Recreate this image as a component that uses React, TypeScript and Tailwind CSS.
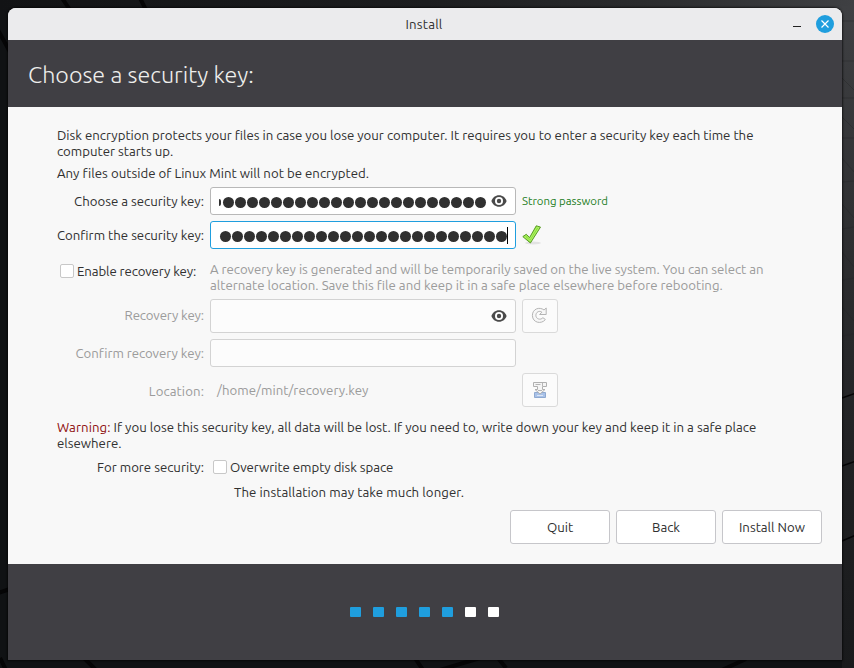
import type { ReactNode } from "react";

function Wallpaper() {
  return (
    <svg className="absolute inset-0" width="854" height="668" viewBox="0 0 854 668" aria-hidden="true">
      <defs>
        <linearGradient id="top" x1="0" y1="0" x2="1" y2="0">
          <stop offset="0" stopColor="#121315" />
          <stop offset="0.5" stopColor="#1c1d1f" />
          <stop offset="0.75" stopColor="#2a2b2d" />
          <stop offset="1" stopColor="#3f4043" />
        </linearGradient>
        <linearGradient id="side" x1="0" y1="0" x2="0" y2="1">
          <stop offset="0" stopColor="#3f4043" />
          <stop offset="0.35" stopColor="#2e2f31" />
          <stop offset="0.7" stopColor="#202123" />
          <stop offset="1" stopColor="#191a1c" />
        </linearGradient>
      </defs>
      <rect width="854" height="668" fill="#101214" />
      <rect width="854" height="20" fill="url(#top)" />
      <rect x="842" y="6" width="12" height="662" fill="url(#side)" />
      <g stroke="#050506" strokeWidth="4" fill="none">
        <path d="M62 -2l8 12M140 -2l6 12M-2 30l12 22M-2 593l12 -4M0 658l6 12M84 658l12 12M415 658l8 12M440 670l40 -12M498 658l8 10M722 670l24 -11" />
      </g>
      <path d="M842 398l14 -5M842 466l14 -5M842 541l14 -6" stroke="#050506" strokeWidth="1.500" />
      <path d="M842 21h12M842 61h12M842 98h12M842 138h12M842 182l12 -1M842 229l12 -2M842 280l12 -2M842 336l12 -2M842 78l12 12M842 117l12 12M842 158l12 14M842 204l12 14M842 252l12 15M842 307l12 14" stroke="#252628" strokeWidth=".6" opacity=".7" />
    </svg>
  );
}

function Eye() {
  return (
    <svg width="16" height="16" viewBox="0 0 16 16" className="shrink-0" aria-hidden="true">
      <path d="M8 2.2C4.4 2.2 1.5 4.6.4 8c1.100 3.400 4 5.800 7.600 5.800s6.500-2.400 7.600-5.800C14.500 4.600 11.600 2.200 8 2.200z" fill="#4a4a4a" />
      <circle cx="8" cy="8" r="4" fill="#fff" />
      <circle cx="8" cy="8" r="2.200" fill="#4a4a4a" />
    </svg>
  );
}

function Dots({ count }: { count: number }) {
  return (
    <>
      {Array.from({ length: count }, (_, i) => (
        <span key={i} className="mr-px h-[11px] w-[11px] shrink-0 rounded-full bg-[#303030]" />
      ))}
    </>
  );
}

function CheckMark() {
  return (
    <svg width="20" height="20" viewBox="0 0 20 20" className="overflow-visible" aria-hidden="true">
      <ellipse cx="11" cy="18" rx="8" ry="1.500" fill="#e2e2e2" />
      <path d="M.8 11.600l3.500-2.300 3.300 3.200L14.300.8l4.200 1.300L8.400 18z" fill="#8ae234" stroke="#5c9a2a" strokeLinejoin="round" />
      <path d="M2.500 11.700l1.700-1.100 3.600 3.600L15 2.100l1.900.6L8.300 16.200z" fill="none" stroke="#b9f27c" strokeWidth=".8" />
    </svg>
  );
}

function Reload() {
  return (
    <svg width="16" height="16" viewBox="0 0 16 16" className="-translate-x-px -translate-y-px" aria-hidden="true">
      <path
        d="M15.200.9v6.600H8.600l2.300-2.300C8.100 3.200 4.900 5.200 4.900 8.400c0 3.600 4.600 5.100 7 2.300l2.500 1.800C10.500 17.600 1.400 15.900 1.400 8.400c0-6.500 7-9 11.700-5.400z"
        fill="#f7f7f7"
        stroke="#b4b4b4"
        strokeWidth="1"
        strokeLinejoin="round"
      />
    </svg>
  );
}

function SaveAs() {
  return (
    <svg width="16" height="16" viewBox="0 0 16 16" aria-hidden="true">
      <path d="M2.500 10.500h11v5h-11z" fill="#a9c2e8" stroke="#8fa9d0" />
      <path d="M1.500.5h13v4h-4v3h2.500L8 12 3 7.500h2.500v-3h-4z" fill="#f5f5f5" stroke="#b0b0b0" />
      <path d="M3.500 2.500h5M10.500 1v3M6 8.500h4" stroke="#b5b5b5" />
      <path d="M5 13.500h6" stroke="#dce6f5" />
    </svg>
  );
}

function Label({ children, muted = false }: { children: ReactNode; muted?: boolean }) {
  return (
    <div className={`w-[147px] shrink-0 text-right whitespace-nowrap ${muted ? "text-[#9b9b9b]" : ""}`}>{children}</div>
  );
}

function CheckBox() {
  return <span className="h-[14px] w-[14px] shrink-0 rounded-[2px] border border-[#c8c8c8] bg-white" />;
}

function IconButton({ children }: { children: ReactNode }) {
  return (
    <button className="flex h-[34px] w-9 items-center justify-center rounded-[3px] border border-[#dadada] bg-[#fbfbfb]">{children}</button>
  );
}

function ActionButton({ children }: { children: ReactNode }) {
  return (
    <button className="h-[34px] w-[100px] rounded-[3px] border border-[#c6c6ca] bg-white">{children}</button>
  );
}

const steps = [true, true, true, true, true, false, false];

export default function App() {
  return (
    <div className="relative h-[668px] w-[854px] overflow-hidden p-2 pr-3 font-['Ubuntu','Noto_Sans',sans-serif] text-[13.22px] leading-4 text-[#303030]">
      <Wallpaper />
      <div className="relative flex h-[652px] w-[834px] flex-col overflow-hidden rounded-t-lg bg-[#f8f8f8] shadow-[0_0_2px_1px_rgba(0,0,0,0.6)]">
        <header className="grid h-8 shrink-0 grid-cols-3 items-center bg-[#ebebed] pr-2">
          <span />
          <span className="pl-1.5 text-center tracking-[0.2px]">Install</span>
          <span className="flex items-center justify-end gap-[15px]">
            <span className="mt-[5px] h-px w-2 bg-[#222]" />
            <span className="flex h-[18px] w-[18px] items-center justify-center rounded-full bg-[#1f9ede]">
              <svg width="8" height="8" viewBox="0 0 8 8" aria-hidden="true">
                <path d="M.5.5l7 7M7.500.5l-7 7" stroke="#fff" strokeWidth="1.200" />
              </svg>
            </span>
          </span>
        </header>
        <h1 className="flex h-[67px] shrink-0 items-center bg-[#403f44] pl-5 text-[23.3px] font-light text-[#eeeeec]">Choose a security key:</h1>

        <main className="h-[457px] shrink-0 pt-5 pr-5 pl-[49px] whitespace-nowrap">
          <p>
            Disk encryption protects your files in case you lose your computer. It requires you to enter a security key each time the
            <br />
            computer starts up.
          </p>
          <p className="mt-1.5 tracking-[0.02px]">Any files outside of Linux Mint will not be encrypted.</p>

          <div className="mt-1.5 flex h-7 items-center gap-1.5">
            <Label>Choose a security key:</Label>
            <div className="flex h-7 w-[306px] items-center rounded-[3px] border border-[#b8b8b8] bg-white pr-2 pl-2">
              <span className="mt-[3px] flex w-[268px] items-center">
                <span className="mr-[1.5px] h-[7px] w-[2px] rounded-r-full bg-[#303030]" />
                <Dots count={22} />
              </span>
              <span className="ml-auto"><Eye /></span>
            </div>
            <span className="text-[11.4px] text-[#1c7d22]">Strong password</span>
          </div>

          <div className="mt-1.5 flex h-7 items-center gap-1.5">
            <Label>Confirm the security key:</Label>
            <div className="flex h-7 w-[306px] items-center rounded-[3px] border border-[#1f9ede] bg-white pl-[8.6px]">
              <span className="mt-[3px] flex items-center"><Dots count={24} /></span>
              <span className="-ml-[0.6px] h-[17px] w-px bg-black" />
            </div>
            <CheckMark />
          </div>

          <div className="mt-3 flex h-8 gap-1.5">
            <div className="flex h-5 w-[147px] items-center gap-[3px] pl-[3px] tracking-[-0.1px]">
              <CheckBox />
              Enable recovery key:
            </div>
            <p className="text-[#9b9b9b]">
              <span className="tracking-[-0.025px]">A recovery key is generated and will be temporarily saved on the live system. You can select an</span>
              <br />
              alternate location. Save this file and keep it in a safe place elsewhere before rebooting.
            </p>
          </div>

          <div className="mt-1.5 flex h-[34px] items-center gap-1.5">
            <div className="pb-0.5 tracking-[-0.13px]"><Label muted>Recovery key:</Label></div>
            <div className="flex h-[34px] w-[306px] items-center justify-end rounded-[3px] border border-[#d3d3d3] bg-[#fcfcfc] pr-2"><Eye /></div>
            <IconButton><Reload /></IconButton>
          </div>
          <div className="mt-1.5 flex h-7 items-center gap-1.5">
            <div className="tracking-[-0.05px]"><Label muted>Confirm recovery key:</Label></div>
            <div className="h-7 w-[306px] rounded-[3px] border border-[#d3d3d3] bg-[#fcfcfc]" />
          </div>
          <div className="mt-1.5 flex h-[34px] items-center gap-1.5">
            <div className="pt-0.5 tracking-[0.1px]"><Label muted>Location:</Label></div>
            <div className="w-[306px] pl-[7px] tracking-[0.04px] text-[#9b9b9b]">/home/mint/recovery.key</div>
            <IconButton><SaveAs /></IconButton>
          </div>

          <p className="mt-3">
            <span className="tracking-[0.08px] text-[#8f1010]">Warning:</span> If you lose this security key, all data will be lost. If you need to, write down your key and keep it in a safe place
            <br />
            elsewhere.
          </p>
          <div className="mt-2 flex h-4 items-center">
            <Label>For more security:</Label>
            <span className="ml-[9px] flex items-center gap-[3px] tracking-[-0.04px]">
              <CheckBox />
              Overwrite empty disk space
            </span>
          </div>
          <p className="mt-[9px] pl-[177px] tracking-[0.07px]">The installation may take much longer.</p>
          <div className="mt-2.5 flex justify-end gap-1.5">
            <ActionButton>Quit</ActionButton>
            <ActionButton>Back</ActionButton>
            <ActionButton>Install Now</ActionButton>
          </div>
        </main>

        <footer className="flex grow justify-center gap-3 bg-[#403f44] pt-[43px] pr-0.5">
          {steps.map((done, i) => (
            <span key={i} className={`h-2.5 w-[11px] rounded-[1px] ${done ? "bg-[#1f9ede]" : "bg-white"}`} />
          ))}
        </footer>
      </div>
    </div>
  );
}
